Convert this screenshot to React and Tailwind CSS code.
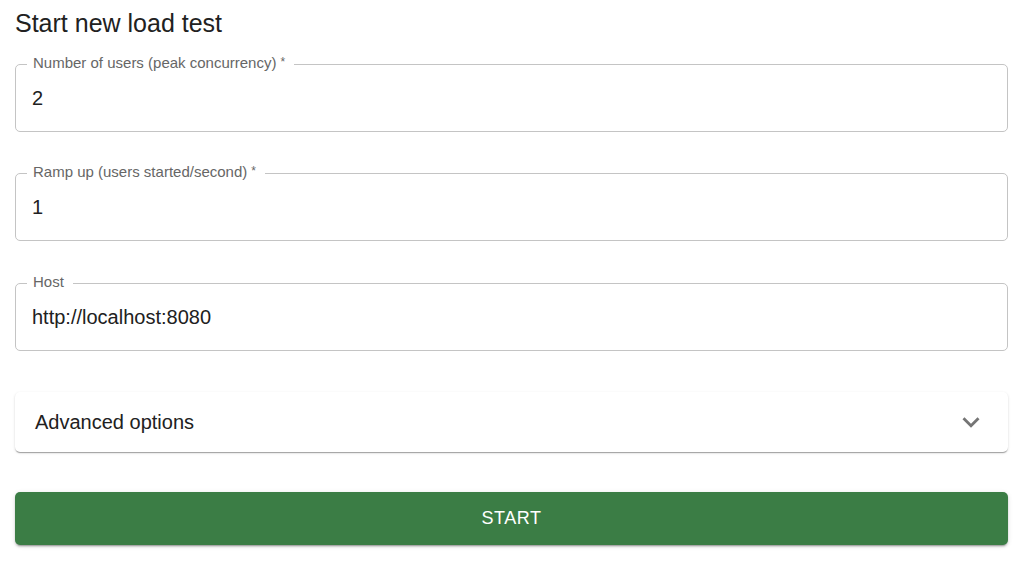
import { useState } from 'react'

const font = { fontFamily: '"Liberation Sans", Arial, sans-serif' }

function OutlinedField({ label, value, required }) {
  const [val, setVal] = useState(value)
  return (
    <div className="relative h-[68px] rounded-[5px] border border-[#c4c4c4]">
      <span className="absolute -top-[11px] left-[11px] bg-white pl-[6px] pr-[9px] text-[15px] leading-[17px] text-[#666666]">
        {label}
        {required && <span className="ml-[4px] text-[12px] align-top">*</span>}
      </span>
      <input
        className="h-full w-full bg-transparent pl-4 pr-4 text-[20px] text-[#212121] outline-none"
        value={val}
        onChange={(e) => setVal(e.target.value)}
      />
    </div>
  )
}

export default function App() {
  const [open, setOpen] = useState(false)

  return (
    <div className="min-h-screen bg-white pl-[15px] pr-[16px] pt-[7px]" style={font}>
      <h1 className="text-[25px] leading-[32px] text-[#212121]">Start new load test</h1>

      <form className="mt-[25px] flex flex-col" onSubmit={(e) => e.preventDefault()}>
        <OutlinedField label="Number of users (peak concurrency)" value="2" required />
        <div className="mt-[41px]">
          <OutlinedField label="Ramp up (users started/second)" value="1" required />
        </div>
        <div className="mt-[42px]">
          <OutlinedField label="Host" value="http://localhost:8080" />
        </div>

        <button
          type="button"
          onClick={() => setOpen(!open)}
          className="mt-[41px] flex h-[60px] w-full items-center justify-between rounded-[5px] bg-white pl-5 pr-5 text-left shadow-[0px_2px_1px_-1px_rgba(0,0,0,0.2),0px_1px_1px_0px_rgba(0,0,0,0.14),0px_1px_3px_0px_rgba(0,0,0,0.12)]"
        >
          <span className="text-[20px] text-[#212121]">Advanced options</span>
          <svg width="34" height="34" viewBox="0 0 24 24" className={open ? 'rotate-180' : ''}>
            <path fill="#757575" d="M16.59 8.59 12 13.17 7.41 8.59 6 10l6 6 6-6z" />
          </svg>
        </button>

        <button
          type="submit"
          className="mt-[40px] h-[53px] w-full rounded-[5px] bg-[#3b7d45] text-[18px] uppercase tracking-[0.03em] text-white shadow-[0px_3px_1px_-2px_rgba(0,0,0,0.2),0px_2px_2px_0px_rgba(0,0,0,0.14),0px_1px_5px_0px_rgba(0,0,0,0.12)]"
        >
          Start
        </button>
      </form>
    </div>
  )
}
